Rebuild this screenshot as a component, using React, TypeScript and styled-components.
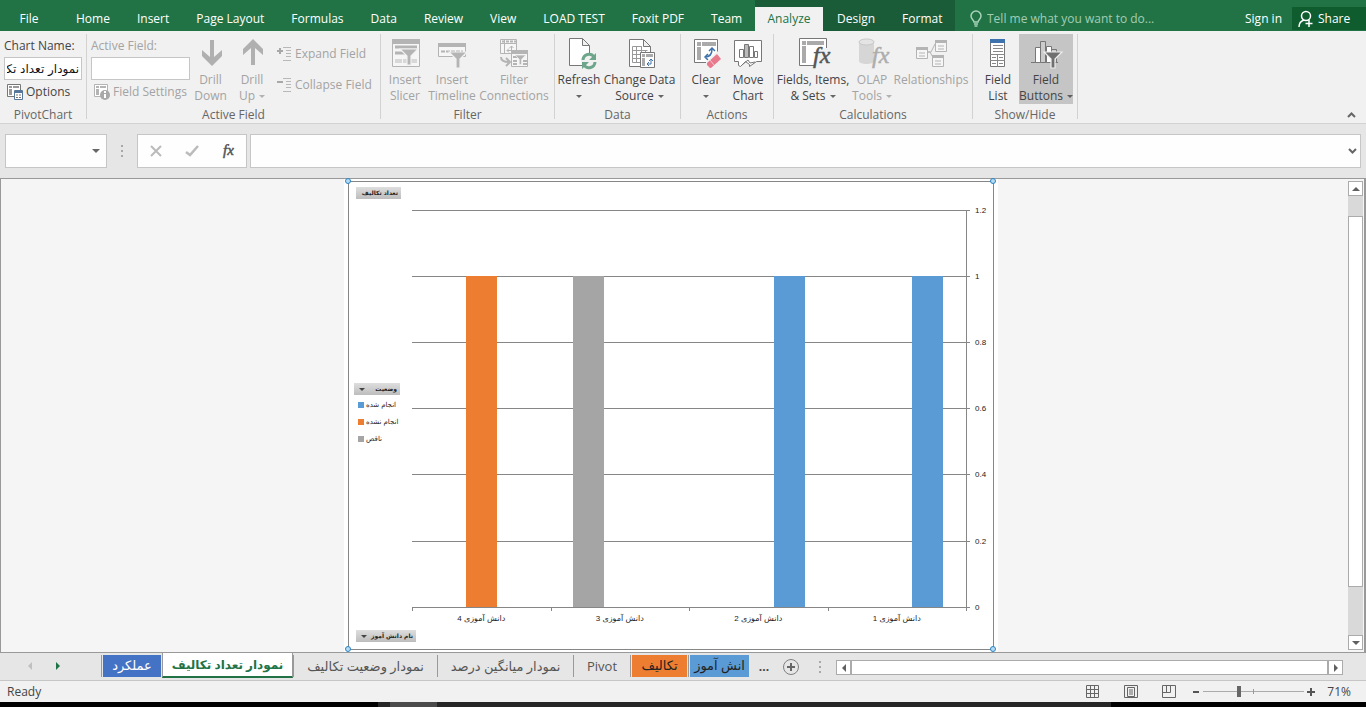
import React from "react";
import styled, { createGlobalStyle, css } from "styled-components";

const Global = createGlobalStyle`
  * { box-sizing: border-box; }
  body {
    margin: 0;
    background: #000;
    color: #444;
    font: 12px/16px "Open Sans", "DejaVu Sans", sans-serif;
  }
  button, input { font: inherit; color: inherit; border: 0; padding: 0; margin: 0; border-radius: 0; background: none; }
  svg { display: block; flex: none; overflow: visible; }
  a { color: inherit; text-decoration: none; }
`;

const Shell = styled.div`
  display: flex;
  flex-direction: column;
  min-height: 100vh;
  overflow: hidden;
`;

/* ---------- title / tab strip ---------- */

const TabStrip = styled.nav`
  display: flex;
  height: 31px;
  background: #217346;
  color: #fff;
  white-space: nowrap;
`;

const RibbonTab = styled.button<{ $file?: boolean; $active?: boolean }>`
  flex: none;
  padding: 7px 13px 0 14px;
  height: 31px;
  ${(p) => p.$file && css`width: 62px; padding-right: 18px;`}
  ${(p) =>
    p.$active &&
    css`
      align-self: flex-end;
      height: 24px;
      padding: 0 12px;
      width: 68px;
      background: #f1f1f1;
      color: #217346;
    `}
`;

const MainTabs = styled.div`
  display: flex;
  flex: none;
  width: 755px;
`;

const ContextTabs = styled.div`
  display: flex;
  flex: none;
  width: 200px;
  background: #1b5c38;
`;

const TellMe = styled.label`
  display: flex;
  align-items: center;
  gap: 5px;
  padding: 7px 0 0 15px;
  flex: 1;
  color: #a9d3ba;
  input { flex: 1; min-width: 0; }
  input::placeholder { color: #a2cdb4; opacity: 1; }
`;

const SignIn = styled.a`
  padding: 11px 10px 0;
`;

const Share = styled.button`
  display: flex;
  align-items: center;
  align-self: flex-end;
  gap: 4px;
  width: 74px;
  height: 23px;
  margin-bottom: 1px;
  padding-left: 6px;
  background: #0f5c2f;
`;

/* ---------- ribbon ---------- */

const Ribbon = styled.div`
  display: flex;
  height: 93px;
  padding-top: 3px;
  background: #f1f1f1;
  border-bottom: 1px solid #d2d2d2;
  white-space: nowrap;
`;

const Group = styled.section<{ $w: number }>`
  position: relative;
  display: flex;
  flex-direction: column;
  flex: none;
  width: ${(p) => p.$w}px;
  height: 85px;
  border-right: 1px solid #d2d2d2;
`;

const GroupBody = styled.div<{ $pad?: number }>`
  display: flex;
  height: 70px;
  padding-left: ${(p) => p.$pad ?? 0}px;
`;

const GroupName = styled.div`
  text-align: center;
  color: #666;
  line-height: 22px;
  height: 15px;
`;

const BigButton = styled.button<{ $w: number; $pressed?: boolean }>`
  display: flex;
  flex-direction: column;
  align-items: center;
  flex: none;
  width: ${(p) => p.$w}px;
  height: 70px;
  padding-top: 3px;
  background: ${(p) => (p.$pressed ? "#c5c5c5" : "transparent")};
  &:disabled { color: #a3a3a3; }
  svg { margin-bottom: 3px; }
`;

const Line = styled.span`
  display: flex;
  align-items: center;
  justify-content: center;
  gap: 4px;
  height: 16px;
`;

const Caret = styled.i`
  width: 0;
  border: 3px solid transparent;
  border-top-color: currentColor;
  border-bottom: 0;
  opacity: 0.8;
`;

const FieldColumn = styled.div<{ $w: number; $off?: boolean }>`
  display: flex;
  flex-direction: column;
  width: ${(p) => p.$w}px;
  padding-top: 4px;
  color: ${(p) => (p.$off ? "#a3a3a3" : "#444")};
  label { height: 19px; }
`;

const TextBox = styled.input`
  width: 100%;
  height: 23px;
  padding: 0 2px;
  border: 1px solid #c6c6c6;
  background: #fff;
  color: #111;
  font: 12px "DejaVu Sans", sans-serif;
`;

const SmallButton = styled.button<{ $pad?: number }>`
  display: flex;
  align-items: center;
  gap: 3px;
  height: 24px;
  padding-left: ${(p) => p.$pad ?? 0}px;
  &:disabled { color: #a3a3a3; }
`;

const SmallStack = styled.div`
  display: flex;
  flex-direction: column;
  gap: 7px;
  padding: 8px 0 0 4px;
`;

const Spacer = styled.div`
  flex: 1;
`;

const Collapse = styled.button`
  align-self: flex-end;
  padding: 0 10px 5px;
`;

/* ---------- formula bar ---------- */

const FormulaBar = styled.div`
  display: flex;
  align-items: center;
  height: 54px;
  padding: 0 5px;
  background: #e6e6e6;
`;

const Box = styled.div<{ $w?: number }>`
  display: flex;
  align-items: center;
  ${(p) => (p.$w ? `flex: none; width: ${p.$w}px;` : "flex: 1;")}
  height: 34px;
  border: 1px solid #c6c6c6;
  background: #fefefe;
  input { flex: 1; min-width: 0; height: 100%; padding: 0 4px; outline: 0; }
`;

const BoxButton = styled.button<{ $w: number }>`
  display: flex;
  align-items: center;
  justify-content: center;
  width: ${(p) => p.$w}px;
  height: 100%;
  color: #666;
`;

const Grip = styled.div<{ $w: number }>`
  display: flex;
  align-items: center;
  justify-content: center;
  width: ${(p) => p.$w}px;
  flex: none;
`;

/* ---------- work area ---------- */

const Work = styled.main`
  display: flex;
  flex: 1;
  min-height: 475px;
  border: 1px solid #999;
  border-right-width: 2px;
  background: #f5f5f5;
`;

const Canvas = styled.div`
  flex: 1;
  display: flex;
  justify-content: center;
  min-width: 0;
  padding-right: 6px;
`;

const ChartSheet = styled.div`
  position: relative;
  width: 654px;
  padding: 2px 4px;
  background: #fff;
`;

const ChartSvg = styled.svg`
  width: 100%;
  height: auto;
  font: 8px "Liberation Sans", "DejaVu Sans", sans-serif;
  fill: #222;
`;

const PivotButton = styled.button<{ $x: number; $y: number; $w: number }>`
  position: absolute;
  left: ${(p) => p.$x}px;
  top: ${(p) => p.$y}px;
  display: flex;
  align-items: center;
  justify-content: space-between;
  width: ${(p) => p.$w}px;
  height: 12px;
  padding: 0 3px 0 5px;
  background: linear-gradient(#dedede, #bdbdbd);
  color: #222;
  font: bold 6px/12px "DejaVu Sans", sans-serif;
  white-space: nowrap;
  span { margin-left: auto; }
`;

const VScroll = styled.div`
  display: flex;
  flex-direction: column;
  flex: none;
  width: 15px;
  margin: 2px 1px;
  background: #d9d9d9;
`;

const ScrollButton = styled.button`
  display: flex;
  align-items: center;
  justify-content: center;
  flex: none;
  width: 15px;
  height: 15px;
  border: 1px solid #ababab;
  background: #fff;
  color: #606060;
`;

const VThumb = styled.div`
  flex: 0 0 79%;
  margin-top: 20px;
  border: 1px solid #ababab;
  background: #fff;
`;

/* ---------- sheet tabs ---------- */

const SheetBar = styled.div`
  display: flex;
  height: 28px;
  background: #e6e6e6;
  border-bottom: 1px solid #c6c6c6;
  white-space: nowrap;
`;

const NavButtons = styled.div`
  display: flex;
  align-items: center;
  justify-content: space-between;
  width: 101px;
  flex: none;
  padding: 0 39px 2px 26px;
`;

const SheetTab = styled.button<{ $w: number; $fill?: string; $color?: string }>`
  flex: none;
  display: flex;
  align-items: center;
  justify-content: center;
  width: ${(p) => p.$w}px;
  height: 22px;
  margin-top: 2px;
  border-left: 1px solid #999;
  color: ${(p) => p.$color ?? "#555"};
  font: 13px/20px "Open Sans", "DejaVu Sans", sans-serif;
  span {
    display: block;
    flex: 1;
    height: 22px;
    margin: 0 1px;
    background: ${(p) => p.$fill ?? "transparent"};
  }
`;

const ActiveTab = styled(SheetTab)`
  height: 25px;
  margin-top: 0;
  border-right: 1px solid #999;
  border-bottom: 2px solid #217346;
  background: #fff;
  color: #217346;
  font-size: 12px;
  font-weight: bold;
`;

const MoreTabs = styled.button`
  width: 28px;
  font-weight: bold;
`;

const AddSheet = styled.button`
  width: 26px;
  display: flex;
  align-items: center;
  justify-content: center;
`;

const HScroll = styled.div`
  display: flex;
  flex: 1;
  height: 15px;
  margin: 7px 23px 0 0;
`;

const HThumb = styled.div`
  flex: 1;
  border: 1px solid #ababab;
  background: #fff;
`;

/* ---------- status bar ---------- */

const StatusBar = styled.footer`
  display: flex;
  align-items: center;
  height: 21px;
  padding: 0 15px 0 7px;
  background: #f1f1f1;
  > span { flex: 1; }
`;

const Views = styled.div`
  display: flex;
  gap: 24px;
  margin-right: 14px;
`;

const Zoom = styled.div`
  display: flex;
  align-items: center;
  button { width: 12px; height: 16px; display: flex; align-items: center; justify-content: center; }
  output { width: 34px; text-align: right; }
`;

const Slider = styled.input`
  appearance: none;
  width: 101px;
  height: 11px;
  margin: 0 1px;
  background:
    linear-gradient(#999, #999) 50px 3px / 1px 5px no-repeat,
    linear-gradient(#ababab, #ababab) 0 5px / 100% 1px no-repeat;
  &::-webkit-slider-thumb {
    appearance: none;
    width: 4px;
    height: 11px;
    background: #666;
  }
`;

const Taskbar = styled.div`
  height: 5px;
  background: linear-gradient(90deg, #000 0 378px, #262626 378px 390px, #4b4b4b 390px 437px, #262626 437px 1111px, #000 1111px);
`;

/* ---------- icons ---------- */

type IconProps = { children: React.ReactNode; w?: number; h?: number };
const Icon = ({ children, w = 32, h = 32 }: IconProps) => (
  <svg width={w} height={h} viewBox={`0 0 ${w} ${h}`} fill="none" aria-hidden="true">
    {children}
  </svg>
);

const G = "#b4b4b4";
const D = "#777";

const Funnel = ({ x, y, c, edge = "#f1f1f1", s = 1 }: { x: number; y: number; c: string; edge?: string; s?: number }) => (
  <path transform={`translate(${x} ${y}) scale(${s})`} d="M0 0H18L11 7V16H7V7Z" fill={c} stroke={edge} strokeWidth="1.2" />
);

const ArrowIcon = ({ up }: { up?: boolean }) => (
  <Icon>
    <g transform={up ? "rotate(180 16.500 15.500)" : "translate(1 0)"}>
      <path d="M14 3h4v17l8-7v6L16 29 6 19v-6l8 7z" fill="#b0b0b0" />
    </g>
  </Icon>
);

const SlicerIcon = () => (
  <Icon>
    <g transform="translate(1 0)">
      <path d="M2.500 2.500h27v27h-27z" fill="#f6f6f6" stroke={G} />
      <path d="M2 2h28v5H2z" fill={G} />
      <path d="M5 10h22M5 16h12" stroke={G} strokeWidth="3" />
      <path d="M5 24h22" stroke="#d8d8d8" strokeWidth="4" strokeDasharray="7 1" />
      <Funnel x={10} y={12} c={G} />
    </g>
  </Icon>
);

const TimelineIcon = () => (
  <Icon>
    <path d="M2.500 6.500h27v13h-27z" fill="#f6f6f6" stroke={G} />
    <path d="M2 6h28v4H2z" fill={G} />
    <path d="M5 14.500h22" stroke={G} strokeWidth="2" strokeDasharray="4 1" />
    <Funnel x={13} y={15} c={G} />
  </Icon>
);

const ConnectionsIcon = () => (
  <Icon>
    <path d="M2.500 2.500h16v14h-16zM6.500 2.500v14M2.500 6.500h16" fill="#f6f6f6" stroke={G} />
    <path d="M4 4.500h14" stroke={G} strokeWidth="2" strokeDasharray="3 1" />
    <path d="M13.500 9v4.500H9M11.500 11l2-2 2 2M11 11.500l-2 2 2 2" stroke={G} />
    <path d="M13.500 13.500h16v16h-16z" fill="#f6f6f6" stroke={G} />
    <path d="M13 13h17v4H13z" fill={G} />
    <path d="M15 20h5M15 24h4M15 27h4M25 24h4M25 27h4" stroke={G} strokeWidth="2" />
    <Funnel x={17} y={18} c={G} s={0.600} />
    <path d="M3 20c0 4 3 5 8 5M8 21l4 4-4 4" stroke={G} strokeWidth="2" />
  </Icon>
);

const PageShape = () => <path d="M6.500 1.500h14l7 7v20h-21z M20.500 1.500v7h7" fill="#fff" stroke={D} />;

const RefreshIcon = () => (
  <Icon>
    <path d="M6.500 1.500h13l7 7v20h-20z M19.500 1.500v7h7" fill="#fff" stroke={D} />
    <circle cx="26" cy="24" r="8" fill="#f1f1f1" />
    <path d="M20 23a6 6 0 0 1 11-3M32 25a6 6 0 0 1-11 3" stroke="#6da68a" strokeWidth="3" />
    <path d="M33 16v7h-7zM19 32v-7h7z" fill="#6da68a" />
  </Icon>
);

const ChangeSourceIcon = () => (
  <Icon>
    <g transform="translate(-1 1)">
      <PageShape />
      <path d="M9.500 8.500h9v16h-9zM9.500 12.500h15M9.500 16.500h15M9.500 20.500h9M13.500 8.500v16M18.500 8.500v16M22.500 12v4" stroke="#999" />
    </g>
    <path d="M16.500 15.500h14v15h-14z" fill="#fff" stroke={D} />
    <path d="M18 17h3v3h-3zM22 17h7v3h-7zM18 21h3v8h-3z" fill="#aaa" />
    <path d="M27 22v5h-4M25 24l2-2 2 2M25 25l-2 2 2 2" stroke="#3e72ad" />
  </Icon>
);

const ClearIcon = () => (
  <Icon>
    <g transform="translate(1 0)">
      <path d="M3.500 2.500h23v23h-23z" fill="#fff" stroke={D} />
      <path d="M6 5h4v4H6zM11 5h14v4H11zM6 10h4v13H6z" fill="#aaa" />
      <path d="M21 12c0 5-2 8-7 8M18 14l3-3 3 3M17 17l-3 3 3 3" stroke="#3e72ad" strokeWidth="1.500" />
      <path d="M15 25 26 14l6 6-10 11h-4l-3-3z" fill="#f1f1f1" />
      <path d="M16 26l10-9 4 5-10 9h-1l-3-3z" fill="#e8788c" />
      <path d="M19 23l4 5" stroke="#f9c6cf" />
    </g>
  </Icon>
);

const MoveChartIcon = () => (
  <Icon>
    <path d="M2.500 3.500h27v21h-5l-7 5v-2l-4-3-5 5-2-1v-4h-4z" fill="#fff" stroke={D} />
    <path d="M7.500 12.500h4v8h-4zM17.500 9.500h4v11h-4zM22.500 14.500h3v6h-3z" fill="#fff" stroke={D} />
    <path d="M12.500 7.500h4v13h-4z" fill="#bbb" stroke={D} />
    <path d="M10 28l6-5 2 3 5-1" stroke={D} />
  </Icon>
);

const Fx = ({ x, y, size, c }: { x: number; y: number; size: number; c: string }) => (
  <text
    x={x}
    y={y}
    fill={c}
    stroke={c}
    strokeWidth="0.500"
    fontFamily="Liberation Serif, serif"
    fontStyle="italic"
    fontSize={size}
  >
    fx
  </text>
);

const FieldsIcon = () => (
  <Icon>
    <g transform="translate(-1 -1)">
      <path d="M3.500 2.500h27v27h-27z" fill="#fff" stroke={D} />
      <path d="M6 5h4v4H6zM11 5h17v4H11zM6 10h4v17H6z" fill="#aaa" />
    </g>
    <path d="M21 11h10v19H17v-6z" fill="#f1f1f1" />
    <Fx x={16} y={26} size={24} c="#555" />
  </Icon>
);

const OlapIcon = () => (
  <Icon>
    <path d="M3 5v19c0 4 15 4 15 0V5z" fill="#d6d6d6" />
    <ellipse cx="10.500" cy="5" rx="7.500" ry="3" fill="#e4e4e4" stroke="#c8c8c8" />
    <Fx x={16} y={26} size={24} c="#adadad" />
  </Icon>
);

const RelationIcon = () => (
  <Icon>
    <path d="M12 15h4l4-8M12 15h3l5 9" stroke={G} />
    {[[1, 10], [20, 3], [17, 18]].map(([x, y]) => (
      <g key={x} transform={`translate(${x} ${y})`}>
        <path d="M.5.500h11v11H.5z" fill="#f6f6f6" stroke={G} />
        <path d="M0 0h12v3H0z" fill={G} />
        <path d="M3 6h6M3 9h6" stroke={G} />
      </g>
    ))}
  </Icon>
);

const FieldListIcon = () => (
  <Icon>
    <path d="M8.500 2.500h14v27h-14z" fill="#fff" stroke={D} />
    <path d="M8 2h15v4H8z" fill="#3e72ad" />
    <path d="M11 8.500h10M11 11.500h10M11 14.500h10M8 17.500h15M8 23.500h15M15.500 17v13" stroke="#888" />
    <path d="M10 20.500h4M17 20.500h4M10 26.500h4M17 26.500h4" stroke="#888" />
  </Icon>
);

const FieldButtonsIcon = () => (
  <Icon>
    <path d="M1 25.500h27" stroke={D} />
    <path d="M5.500 10.500h5v15h-5zM16.500 9.500h5v16h-5z" fill="#fff" stroke={D} />
    <path d="M10.500 4.500h5v21h-5zM21.500 12.500h5v13h-5z" fill="#ccc" stroke={D} />
    <Funnel x={14} y={15} c="#707070" edge="#eee" />
  </Icon>
);

const OptionsIcon = ({ info }: { info?: boolean }) => {
  const c = info ? G : D;
  return (
    <Icon w={16} h={16}>
      <path d="M.5.500h13v12H.5z" fill="#fff" stroke={c} />
      <path d="M2 2h3v2H2zM6 2h6v2H6zM2 5h3v6H2z" fill={info ? G : "#999"} />
      {info ? (
        <>
          <circle cx="11" cy="11" r="5" fill="#a8a8a8" />
          <path d="M11 10v4M11 7v2" stroke="#fff" strokeWidth="2" />
        </>
      ) : (
        <>
          <path d="M7.500 6.500h8v9h-8z" fill="#fff" stroke="#56779c" />
          <path d="M8 7h7v2H8z" fill="#56779c" />
          <path d="M9 11h2M12 11h2M9 13.500h2M12 13.500h2" stroke="#777" />
        </>
      )}
    </Icon>
  );
};

const ExpandIcon = ({ plus }: { plus?: boolean }) => (
  <Icon w={15} h={16}>
    <path d={plus ? "M0 5h6M3 2v6" : "M0 5h6"} stroke="#a8a8a8" strokeWidth="2" />
    <path d="M6 1.500h8M9 4.500h5M9 7.500h5M9 10.500h5M6 14.500h8" stroke="#b8b8b8" />
  </Icon>
);

const Triangle = ({ d, c = "currentColor" }: { d: string; c?: string }) => (
  <svg width="8" height="8" viewBox="0 0 8 8" aria-hidden="true">
    <path d={d} fill={c} />
  </svg>
);
const UP = "M0 6h8L4 2z";
const DOWN = "M0 2h8L4 6z";
const LEFT = "M6 0v8L2 4z";
const RIGHT = "M2 0v8l4-4z";

const Dots = () => (
  <svg width="3" height="12" viewBox="0 0 3 12" aria-hidden="true">
    <path d="M0 0h2v2H0zM0 5h2v2H0zM0 10h2v2H0z" fill="#a8a8a8" />
  </svg>
);

/* ---------- chart ---------- */

const SERIES = [
  { name: "انجام شده", color: "#5b9bd5" },
  { name: "انجام نشده", color: "#ed7d31" },
  { name: "ناقص", color: "#a5a5a5" },
];
const CATEGORIES = [
  { name: "دانش آموزی 4", series: 1, value: 1 },
  { name: "دانش آموزی 3", series: 2, value: 1 },
  { name: "دانش آموزی 2", series: 0, value: 1 },
  { name: "دانش آموزی 1", series: 0, value: 1 },
];
const PLOT = { left: 64, right: 618, top: 29, bottom: 426, max: 1.2 };
const yOf = (v: number) => Math.floor(PLOT.bottom - (v / PLOT.max) * (PLOT.bottom - PLOT.top) + 0.2);
const BAR = 31;

const Chart = () => {
  const step = (PLOT.right - PLOT.left) / CATEGORIES.length;
  return (
    <ChartSvg viewBox="0 0 646 469" role="img" aria-label="نمودار تعداد تکالیف">
      <rect x="0.5" y="0.5" width="645" height="468" fill="#fff" stroke="#868686" />
      <g fill="#868686" shapeRendering="crispEdges">
        {[0, 0.2, 0.4, 0.6, 0.8, 1, 1.2].map((v) => (
          <rect key={v} x={PLOT.left} y={yOf(v)} width={PLOT.right - PLOT.left + 4} height="1" />
        ))}
        <rect x={PLOT.right} y={PLOT.top} width="1" height={PLOT.bottom - PLOT.top} />
        {[0, 1, 2, 3, 4].map((i) => (
          <rect key={i} x={Math.round(PLOT.left + i * step)} y={PLOT.bottom} width="1" height="4" />
        ))}
      </g>
      {[0, 0.2, 0.4, 0.6, 0.8, 1, 1.2].map((v) => (
        <text key={v} x={PLOT.right + 9} y={yOf(v) + 3}>{v}</text>
      ))}
      {CATEGORIES.map((c, i) => {
        const mid = PLOT.left + (i + 0.5) * step;
        return (
          <g key={c.name}>
            <rect
              x={Math.round(mid + BAR / 2 - c.series * BAR)}
              y={yOf(c.value)}
              width={BAR}
              height={yOf(0) - yOf(c.value)}
              fill={SERIES[c.series].color}
            />
            <text x={mid} y={PLOT.bottom + 14} textAnchor="middle" direction="rtl">{c.name}</text>
          </g>
        );
      })}
      {SERIES.map((s, i) => (
        <g key={s.name}>
          <rect x="10" y={221 + i * 17} width="6" height="6" fill={s.color} />
          <text x="18" y={226 + i * 17} fontSize="7">{s.name}</text>
        </g>
      ))}
      {[[0, 0], [645, 0], [0, 468], [645, 468]].map(([x, y]) => (
        <circle key={`${x}-${y}`} cx={x} cy={y} r="2.500" fill="#b5dcf5" stroke="#2e83c0" />
      ))}
    </ChartSvg>
  );
};

const TABS = ["Home", "Insert", "Page Layout", "Formulas", "Data", "Review", "View", "LOAD TEST", "Foxit PDF", "Team"];

export default function App() {
  return (
    <Shell>
      <Global />
      <TabStrip>
        <MainTabs>
          <RibbonTab $file>File</RibbonTab>
          {TABS.map((t) => (
            <RibbonTab key={t}>{t}</RibbonTab>
          ))}
        </MainTabs>
        <ContextTabs>
          <RibbonTab $active>Analyze</RibbonTab>
          <RibbonTab>Design</RibbonTab>
          <RibbonTab>Format</RibbonTab>
        </ContextTabs>
        <TellMe>
          <Icon w={12} h={16}>
            <path d="M4 11c0-2-3-3-3-6a5 5 0 0 1 10 0c0 3-3 4-3 6zM4 13h4M4.500 15h3" stroke="#a9d3ba" strokeWidth="1.500" />
          </Icon>
          <input aria-label="Tell me" placeholder="Tell me what you want to do..." />
        </TellMe>
        <SignIn href="#signin">Sign in</SignIn>
        <Share>
          <Icon w={16} h={18}>
            <circle cx="8" cy="6" r="4.500" stroke="#fff" strokeWidth="1.500" />
            <path d="M1 17c0-4 2-6 5-7M11 10v7M7.500 13.500h7" stroke="#fff" strokeWidth="1.500" />
          </Icon>
          Share
        </Share>
      </TabStrip>

      <Ribbon>
        <Group $w={87}>
          <GroupBody $pad={4}>
            <FieldColumn $w={78}>
              <label htmlFor="chart-name">Chart Name:</label>
              <TextBox id="chart-name" dir="rtl" defaultValue="نمودار تعداد تکالیف" />
              <SmallButton $pad={3}><OptionsIcon />Options</SmallButton>
            </FieldColumn>
          </GroupBody>
          <GroupName>PivotChart</GroupName>
        </Group>
        <Group $w={294}>
          <GroupBody $pad={4}>
            <FieldColumn $w={99} $off>
              <label htmlFor="active-field">Active Field:</label>
              <TextBox id="active-field" />
              <SmallButton disabled $pad={3}><OptionsIcon info />Field Settings</SmallButton>
            </FieldColumn>
            <BigButton $w={41} disabled><ArrowIcon /><Line>Drill</Line><Line>Down</Line></BigButton>
            <BigButton $w={42} disabled><ArrowIcon up /><Line>Drill</Line><Line>Up<Caret /></Line></BigButton>
            <SmallStack>
              <SmallButton disabled><ExpandIcon plus />Expand Field</SmallButton>
              <SmallButton disabled><ExpandIcon />Collapse Field</SmallButton>
            </SmallStack>
          </GroupBody>
          <GroupName>Active Field</GroupName>
        </Group>
        <Group $w={174}>
          <GroupBody $pad={2}>
            <BigButton $w={44} disabled><SlicerIcon /><Line>Insert</Line><Line>Slicer</Line></BigButton>
            <BigButton $w={50} disabled><TimelineIcon /><Line>Insert</Line><Line>Timeline</Line></BigButton>
            <BigButton $w={74} disabled><ConnectionsIcon /><Line>Filter</Line><Line>Connections</Line></BigButton>
          </GroupBody>
          <GroupName>Filter</GroupName>
        </Group>
        <Group $w={126}>
          <GroupBody $pad={2}>
            <BigButton $w={44}><RefreshIcon /><Line>Refresh</Line><Line><Caret /></Line></BigButton>
            <BigButton $w={77}><ChangeSourceIcon /><Line>Change Data</Line><Line>Source<Caret /></Line></BigButton>
          </GroupBody>
          <GroupName>Data</GroupName>
        </Group>
        <Group $w={93}>
          <GroupBody $pad={4}>
            <BigButton $w={42}><ClearIcon /><Line>Clear</Line><Line><Caret /></Line></BigButton>
            <BigButton $w={42}><MoveChartIcon /><Line>Move</Line><Line>Chart</Line></BigButton>
          </GroupBody>
          <GroupName>Actions</GroupName>
        </Group>
        <Group $w={199}>
          <GroupBody $pad={2}>
            <BigButton $w={74}><FieldsIcon /><Line>Fields, Items,</Line><Line>&amp; Sets<Caret /></Line></BigButton>
            <BigButton $w={44} disabled><OlapIcon /><Line>OLAP</Line><Line>Tools<Caret /></Line></BigButton>
            <BigButton $w={74} disabled><RelationIcon /><Line>Relationships</Line></BigButton>
          </GroupBody>
          <GroupName>Calculations</GroupName>
        </Group>
        <Group $w={105}>
          <GroupBody $pad={4}>
            <BigButton $w={42}><FieldListIcon /><Line>Field</Line><Line>List</Line></BigButton>
            <BigButton $w={54} $pressed><FieldButtonsIcon /><Line>Field</Line><Line>Buttons<Caret /></Line></BigButton>
          </GroupBody>
          <GroupName>Show/Hide</GroupName>
        </Group>
        <Spacer />
        <Collapse aria-label="Collapse the ribbon">
          <Icon w={9} h={6}><path d="M1 5l3.500-3.500L8 5" stroke="#666" strokeWidth="2" /></Icon>
        </Collapse>
      </Ribbon>

      <FormulaBar>
        <Box $w={102}>
          <input aria-label="Name box" />
          <BoxButton $w={20} aria-label="Open name list"><Triangle d={DOWN} /></BoxButton>
        </Box>
        <Grip $w={30}><Dots /></Grip>
        <Box $w={110}>
          <BoxButton $w={36} aria-label="Cancel">
            <Icon w={12} h={12}><path d="M1 1l10 10M11 1L1 11" stroke="#bbb" strokeWidth="2" /></Icon>
          </BoxButton>
          <BoxButton $w={36} aria-label="Enter">
            <Icon w={14} h={12}><path d="M1 7l4 3 8-9" stroke="#bbb" strokeWidth="2.500" /></Icon>
          </BoxButton>
          <BoxButton $w={36} aria-label="Insert function">
            <Icon w={14} h={18}><Fx x={2} y={13} size={15} c="#555" /></Icon>
          </BoxButton>
        </Box>
        <Grip $w={3} />
        <Box>
          <input aria-label="Formula" />
          <BoxButton $w={16} aria-label="Expand formula bar">
            <Icon w={9} h={6}><path d="M1 1l3.500 3.500L8 1" stroke="#666" strokeWidth="2" /></Icon>
          </BoxButton>
        </Box>
      </FormulaBar>

      <Work>
        <Canvas>
          <ChartSheet>
            <Chart />
            <PivotButton $x={12} $y={8} $w={45}><span>تعداد تکالیف</span></PivotButton>
            <PivotButton $x={10} $y={204} $w={46}><Caret /><span>وضعیت</span></PivotButton>
            <PivotButton $x={12} $y={451} $w={60}><Caret /><span>نام دانش آموز</span></PivotButton>
          </ChartSheet>
        </Canvas>
        <VScroll>
          <ScrollButton aria-label="Scroll up"><Triangle d={UP} /></ScrollButton>
          <VThumb />
          <Spacer />
          <ScrollButton aria-label="Scroll down"><Triangle d={DOWN} /></ScrollButton>
        </VScroll>
      </Work>

      <SheetBar>
        <NavButtons>
          <button aria-label="Previous sheet"><Triangle d={LEFT} c="#c0c0c0" /></button>
          <button aria-label="Next sheet"><Triangle d={RIGHT} c="#217346" /></button>
        </NavButtons>
        <SheetTab $w={61} $fill="#4472c4" $color="#fff"><span>عملکرد</span></SheetTab>
        <ActiveTab $w={131}>نمودار تعداد تکالیف</ActiveTab>
        <SheetTab $w={144}>نمودار وضعیت تکالیف</SheetTab>
        <SheetTab $w={136}>نمودار میانگین درصد</SheetTab>
        <SheetTab $w={57}>Pivot</SheetTab>
        <SheetTab $w={58} $fill="#ed7d31" $color="#222"><span>تکالیف</span></SheetTab>
        <SheetTab $w={62} $fill="#5b9bd5" $color="#222"><span>انش آموز</span></SheetTab>
        <MoreTabs>...</MoreTabs>
        <AddSheet aria-label="New sheet">
          <Icon w={16} h={16}>
            <circle cx="8" cy="8" r="7.500" stroke="#808080" />
            <path d="M8 4v8M4 8h8" stroke="#666" strokeWidth="2" />
          </Icon>
        </AddSheet>
        <Grip $w={32}><Dots /></Grip>
        <HScroll>
          <ScrollButton aria-label="Scroll left"><Triangle d={LEFT} /></ScrollButton>
          <HThumb />
          <ScrollButton aria-label="Scroll right"><Triangle d={RIGHT} /></ScrollButton>
        </HScroll>
      </SheetBar>

      <StatusBar>
        <span>Ready</span>
        <Views>
          <button aria-label="Normal view">
            <Icon w={14} h={14}><path d="M.5.500h12v12H.5zM4.500.500v12M8.500.500v12M.5 4.500h12M.5 8.500h12" stroke="#666" /></Icon>
          </button>
          <button aria-label="Page layout view">
            <Icon w={14} h={14}><path d="M.5.500h13v12H.5zM3.500 2.500h7v9h-7zM5 5h4M5 7h4M5 9h4" stroke="#666" /></Icon>
          </button>
          <button aria-label="Page break view">
            <Icon w={14} h={14}><path d="M.5.500h13v12H.5zM4.500.500v7M8.500.500v7M.5 7.500h8" stroke="#666" /></Icon>
          </button>
        </Views>
        <Zoom>
          <button aria-label="Zoom out"><Icon w={8} h={8}><path d="M1 4h6" stroke="#555" strokeWidth="2" /></Icon></button>
          <Slider type="range" aria-label="Zoom" min={0} max={100} defaultValue={35} />
          <button aria-label="Zoom in"><Icon w={8} h={8}><path d="M0 4h8M4 0v8" stroke="#555" strokeWidth="2" /></Icon></button>
          <output>71%</output>
        </Zoom>
      </StatusBar>
      <Taskbar />
    </Shell>
  );
}
